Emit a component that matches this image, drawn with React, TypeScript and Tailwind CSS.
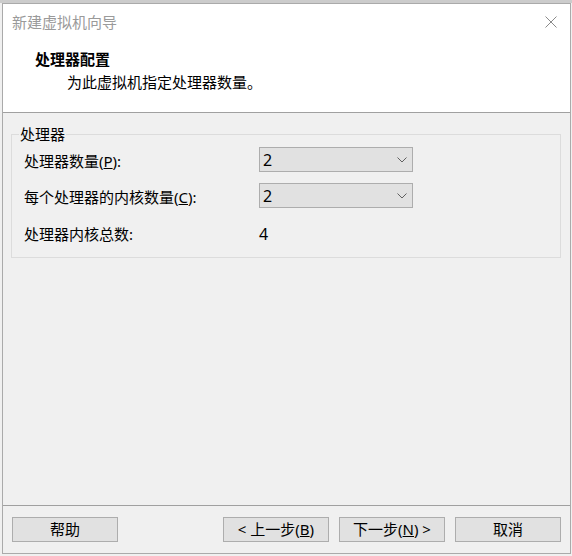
import { ReactNode } from 'react'

const font = { fontFamily: '"Noto Sans", "Noto Sans CJK SC", sans-serif' }

function Chevron() {
  return (
    <svg width="10" height="6" viewBox="0 0 10 6" className="shrink-0">
      <path d="M0.5 0.5 L5 5 L9.5 0.5" fill="none" stroke="#606060" strokeWidth="1" />
    </svg>
  )
}

function Combo({ value }: { value: string }) {
  return (
    <div className="flex h-[25px] w-[154px] items-center justify-between border border-[#adadad] bg-[#e1e1e1] pl-[3px] pr-[5px]">
      <span className="text-[16px] leading-none text-black">{value}</span>
      <Chevron />
    </div>
  )
}

function Btn({ children }: { children: ReactNode }) {
  return (
    <button className="flex h-[25px] w-[106px] items-center justify-center border border-[#adadad] bg-[#e1e1e1] text-[15px] leading-none text-black">
      {children}
    </button>
  )
}

export default function App() {
  return (
    <div className="h-[556px] w-[572px] overflow-hidden bg-[#f0f0f0]" style={font}>
      <div className="h-[3px] bg-[#cccccc]" />
      <div className="ml-[2px] flex h-[551px] w-[569px] flex-col border border-[#aaaaaa] bg-white">
        {/* title bar */}
        <div className="flex h-[36px] items-center justify-between pl-[9px] pr-[13px]">
          <span className="text-[15px] text-[#9a9a9a]">新建虚拟机向导</span>
          <svg width="12" height="12" viewBox="0 0 12 12">
            <path d="M0.5 0.5 L11.5 11.5 M11.5 0.5 L0.5 11.5" stroke="#8a8a8a" strokeWidth="1" />
          </svg>
        </div>

        {/* header */}
        <div className="flex h-[73px] flex-col border-b border-[#a0a0a0] pt-[8px]">
          <div className="pl-[32px] text-[15px] font-bold leading-[22px] text-black">处理器配置</div>
          <div className="pl-[64px] text-[15px] leading-[24px] text-black">为此虚拟机指定处理器数量。</div>
        </div>

        {/* body */}
        <div className="flex h-[392px] flex-col bg-[#f0f0f0] pt-[11px]">
          <fieldset className="ml-[8px] mr-[9px] h-[134px] border border-[#dcdcdc]">
            <legend className="ml-[7px] px-[1px] text-[15px] leading-[20px] text-black">处理器</legend>
            <div className="mt-[3px] grid grid-cols-[235px_1fr] items-start gap-y-[11px] pl-[12px] text-[15px] text-black">
              <span className="h-[25px] leading-[28px]">处理器数量(<u>P</u>):</span>
              <Combo value="2" />
              <span className="h-[25px] leading-[28px]">每个处理器的内核数量(<u>C</u>):</span>
              <Combo value="2" />
              <span className="mt-[1px] h-[25px] leading-[28px]">处理器内核总数:</span>
              <span className="mt-[1px] h-[25px] text-[16px] leading-[28px]">4</span>
            </div>
          </fieldset>
        </div>

        {/* footer */}
        <div className="flex flex-1 items-start gap-[10px] border-t border-[#a0a0a0] bg-[#f0f0f0] pl-[9px] pr-[9px] pt-[11px]">
          <Btn>帮助</Btn>
          <div className="flex-1" />
          <Btn>&lt; 上一步(<u>B</u>)</Btn>
          <Btn>下一步(<u>N</u>) &gt;</Btn>
          <Btn>取消</Btn>
        </div>
      </div>
    </div>
  )
}
